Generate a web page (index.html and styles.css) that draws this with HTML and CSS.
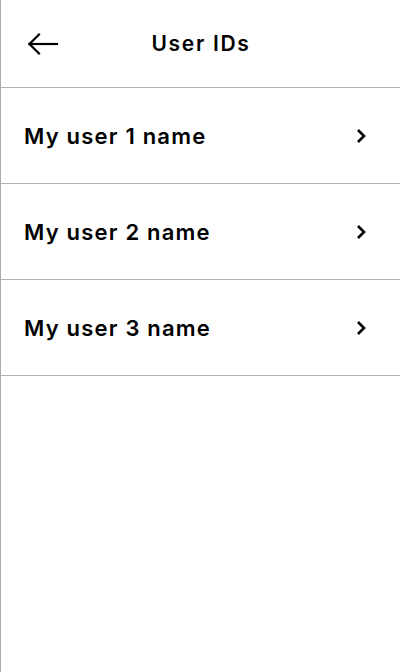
FILE: index.html
```html
<!DOCTYPE html>
<html>
<head>
<meta charset="utf-8">
<link rel="stylesheet" href="styles.css">
</head>
<body>
<div class="screen">
  <header class="header">
    <button class="back" aria-label="Back">
      <svg width="34" height="26" viewBox="0 0 34 26" fill="none" stroke="#000" stroke-width="2.2" stroke-linecap="square" stroke-linejoin="miter">
        <path d="M3.5 13H31"/>
        <path d="M13 3.5L3.5 13L13 22.5"/>
      </svg>
    </button>
    <h1 class="title">User IDs</h1>
  </header>
  <ul class="list">
    <li class="row"><span class="name">My user 1 name</span>
      <svg class="chev" width="10" height="16" viewBox="0 0 10 16" fill="none" stroke="#000" stroke-width="2.6"><path d="M2 2L8 8L2 14"/></svg></li>
    <li class="row"><span class="name">My user 2 name</span>
      <svg class="chev" width="10" height="16" viewBox="0 0 10 16" fill="none" stroke="#000" stroke-width="2.6"><path d="M2 2L8 8L2 14"/></svg></li>
    <li class="row"><span class="name">My user 3 name</span>
      <svg class="chev" width="10" height="16" viewBox="0 0 10 16" fill="none" stroke="#000" stroke-width="2.6"><path d="M2 2L8 8L2 14"/></svg></li>
  </ul>
</div>
</body>
</html>
```
FILE: styles.css
```css
* { box-sizing: border-box; }
html, body { margin: 0; padding: 0; background: #fff; }
body { font-family: Inter, "Noto Sans", sans-serif; color: #000; }
.screen {
  width: 400px;
  height: 672px;
  border-left: 1px solid #aaaaaa;
  display: flex;
  flex-direction: column;
}
.header {
  height: 88px;
  border-bottom: 1px solid #b3b3b3;
  position: relative;
  display: flex;
  align-items: center;
  justify-content: center;
}
.back {
  position: absolute;
  left: 25px;
  top: 31px;
  padding: 0;
  margin: 0;
  border: 0;
  background: none;
  display: flex;
}
.title {
  margin: 0 0 0 1px;
  font-size: 21px;
  font-weight: 600;
  letter-spacing: 1.7px;
  line-height: 24px;
}
.list { list-style: none; margin: 0; padding: 0; }
.row {
  height: 96px;
  border-bottom: 1px solid #b3b3b3;
  display: flex;
  align-items: center;
  justify-content: space-between;
  padding: 0 34px 0 23px;
}
.name {
  font-size: 22px;
  font-weight: 600;
  letter-spacing: 1.2px;
  line-height: 26px;
}
.chev { display: block; }
```
